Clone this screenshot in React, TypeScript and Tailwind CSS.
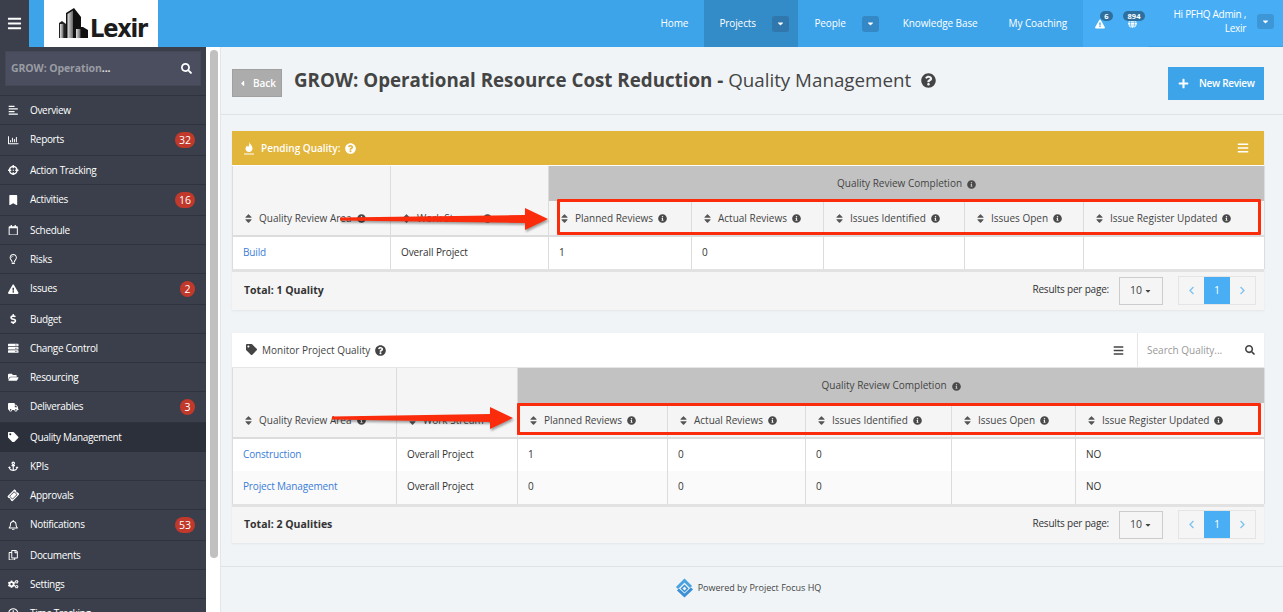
import React from 'react'
import {
    FaAlignLeft, FaRegChartBar, FaCrosshairs, FaBookmark, FaRegCalendar, FaRegLightbulb,
    FaExclamationTriangle, FaDollarSign, FaServer, FaFolderOpen, FaTruck, FaTag, FaAnchor,
    FaTicketAlt, FaRegBell, FaRegCopy, FaCogs, FaRegClock, FaSearch, FaBars, FaSort,
    FaInfoCircle, FaQuestionCircle, FaPlus, FaCaretDown, FaCaretLeft, FaChevronLeft,
    FaChevronRight, FaGlobe,
} from 'react-icons/fa'

const font = { fontFamily: '"Open Sans", sans-serif' }

const menu = [
    { label: 'Overview', icon: FaAlignLeft, h: 'h-[29px]' },
    { label: 'Reports', icon: FaRegChartBar, badge: '32', h: 'h-[31px]' },
    { label: 'Action Tracking', icon: FaCrosshairs, h: 'h-[29px]' },
    { label: 'Activities', icon: FaBookmark, badge: '16', h: 'h-[31px]' },
    { label: 'Schedule', icon: FaRegCalendar, h: 'h-[29px]' },
    { label: 'Risks', icon: FaRegLightbulb, h: 'h-[29px]' },
    { label: 'Issues', icon: FaExclamationTriangle, badge: '2', h: 'h-[31px]' },
    { label: 'Budget', icon: FaDollarSign, h: 'h-[29px]' },
    { label: 'Change Control', icon: FaServer, h: 'h-[29px]' },
    { label: 'Resourcing', icon: FaFolderOpen, h: 'h-[29px]' },
    { label: 'Deliverables', icon: FaTruck, badge: '3', h: 'h-[31px]' },
    { label: 'Quality Management', icon: FaTag, h: 'h-[29px]', active: true },
    { label: 'KPIs', icon: FaAnchor, h: 'h-[29px]' },
    { label: 'Approvals', icon: FaTicketAlt, h: 'h-[29px]', tilt: true },
    { label: 'Notifications', icon: FaRegBell, badge: '53', h: 'h-[31px]' },
    { label: 'Documents', icon: FaRegCopy, h: 'h-[29px]' },
    { label: 'Settings', icon: FaCogs, h: 'h-[29px]' },
    { label: 'Time Tracking', icon: FaRegClock, h: 'h-[29px]' },
]

const LexirLogo = () => (
    <div className="w-[114px] h-[47px] bg-white flex items-end pl-[15px] pb-[9px]">
        <svg width="29" height="30" viewBox="0 0 29 30" className="shrink-0">
            <defs>
                <linearGradient id="tower" x1="0" y1="0" x2="1" y2="0">
                    <stop offset="0" stopColor="#e0e0e0" />
                    <stop offset="1" stopColor="#666" />
                </linearGradient>
            </defs>
            <path d="M7 30V5l8-5 7 9v10h2l5 3v8z" fill="#111" />
            <path d="M0 30V15l3-2 4 3v14z" fill="#222" />
            <path d="M8.500 30V6l5.500-3.500V30z" fill="url(#tower)" />
            <path d="M1 30V16h3.500v14z" fill="url(#tower)" />
            <path d="M17 30V21h4.500v9z" fill="url(#tower)" />
        </svg>
        <span
            className="text-[25px] font-bold leading-[19px] h-[19px] text-[#1c1c1c] ml-[2px] tracking-[-1.2px]"
            style={{ fontFamily: '"DejaVu Sans Condensed", "DejaVu Sans", sans-serif' }}
        >
            Lexir
        </span>
    </div>
)

const NavCaret = ({ dark }: { dark?: boolean }) => (
    <span className={`w-[17px] h-[16px] rounded-[3px] flex items-center justify-center text-white ${dark ? 'bg-[#2f77ac]' : 'bg-[#3488c6]'}`}>
        <FaCaretDown className="text-[9px]" />
    </span>
)

const Sidebar = () => (
    <aside className="w-[206px] shrink-0 bg-[#3a3f4b] flex flex-col overflow-hidden">
        <div className="h-[49px] shrink-0 px-[5px] pt-[4px] border-b border-[#2f333d]">
            <div className="h-[35px] bg-[#4a4e5e] border border-[#454957] flex items-center justify-between pl-[5px] pr-[8px]">
                <span className="text-[10.5px] font-bold text-[#9a9ca4] tracking-[-0.1px]">GROW: Operation<span className="text-[#e4e4e4]">...</span></span>
                <FaSearch className="text-[11px] text-white" />
            </div>
        </div>
        {menu.map((m) => (
            <div
                key={m.label}
                className={`${m.h} shrink-0 flex items-center pl-[8px] pr-[11px] border-b ${m.active ? 'bg-[#2c303b] border-[#2c303b]' : 'border-[#2f333d]'}`}
            >
                <span className={`w-[11px] flex justify-center text-white mr-[11px] ${m.tilt ? '-rotate-45' : ''}`}>
                    <m.icon className="text-[10.5px]" />
                </span>
                <span className={`text-[10px] text-white flex-1 tracking-[-0.33px] ${m.badge ? 'pb-[2px]' : ''}`}>{m.label}</span>
                {m.badge && (
                    <span className="min-w-[15px] h-[16px] px-[4px] rounded-full bg-[#c0392b] text-white text-[10.5px] leading-[16px] text-center">{m.badge}</span>
                )}
            </div>
        ))}
    </aside>
)

const Info = () => <FaInfoCircle className="inline text-[9px] ml-[5px] text-[#4a4a4a] shrink-0" />

const HeadCell = ({ label }: { label: string }) => (
    <th className="border-r border-b-2 border-[#dcdcdc] bg-[#f5f5f5] pl-[10px] pr-0 align-middle text-left font-normal overflow-hidden">
        <span className="flex items-center whitespace-nowrap text-[10px] font-medium text-[#444]">
            <FaSort className="text-[11px] text-[#555] mr-[5px] shrink-0" />
            {label}
            <Info />
        </span>
    </th>
)

const cols = ['Planned Reviews', 'Actual Reviews', 'Issues Identified', 'Issues Open', 'Issue Register Updated']

const QualityTable = ({ widths, rows }: { widths: number[]; rows: string[][] }) => (
    <table className="w-full table-fixed border-collapse border-x border-[#dcdcdc]">
        <colgroup>
            {widths.map((w, i) => <col key={i} style={{ width: w }} />)}
        </colgroup>
        <thead>
            <tr className="h-[35px]">
                <th className="bg-[#f5f5f5] border-r border-[#dcdcdc]" />
                <th className="bg-[#f5f5f5] border-r border-[#dcdcdc]" />
                <th colSpan={5} className="bg-[#c2c2c2] text-[10px] font-medium text-[#444] text-center">
                    Quality Review Completion
                    <Info />
                </th>
            </tr>
            <tr className="h-[35px]">
                <HeadCell label="Quality Review Area" />
                <HeadCell label="Work Stream" />
                {cols.map((c) => <HeadCell key={c} label={c} />)}
            </tr>
        </thead>
        <tbody>
            {rows.map((r, i) => (
                <tr key={r[0]} className={`h-[33px] ${i % 2 ? 'bg-[#fafafa]' : 'bg-white'}`}>
                    {r.map((c, j) => (
                        <td
                            key={j}
                            className={`pl-[10px] pb-[2px] text-[10px] border-r border-[#dcdcdc] ${j === 0 ? 'text-[#3b7dd8] tracking-[-0.15px]' : 'text-[#333] tracking-[-0.1px]'}`}
                        >
                            {c}
                        </td>
                    ))}
                </tr>
            ))}
        </tbody>
    </table>
)

const PanelFooter = ({ total, h }: { total: string; h: string }) => (
    <div className={`${h} border-t-[3px] border-[#e2e2e2] bg-[#f5f5f5] flex items-center justify-between pl-[12px] pr-[8px] pb-[1px]`}>
        <span className="text-[10.5px] font-bold text-[#333]">{total}</span>
        <div className="flex items-center">
            <span className="text-[10px] text-[#333] tracking-[-0.2px] mr-[10px] pb-[2px]">Results per page:</span>
            <span className="w-[44px] h-[28px] border border-[#ccc] flex items-center justify-center text-[10.5px] text-[#444] mr-[15px]">
                10
                <FaCaretDown className="text-[8px] ml-[2px]" />
            </span>
            <div className="flex h-[29px] border border-[#e4e4e4] text-[#7fc4f2] text-[9px]">
                <span className="w-[25px] flex items-center justify-center"><FaChevronLeft /></span>
                <span className="w-[26px] flex items-center justify-center bg-[#4aaef5] text-white text-[10.5px]">1</span>
                <span className="w-[25px] flex items-center justify-center"><FaChevronRight /></span>
            </div>
        </div>
    </div>
)

// Red markup drawn over the screenshot: arrow plus highlight box
const Arrow = ({ cls, w }: { cls: string; w: number }) => (
    <svg width={w + 6} height="30" viewBox={`0 0 ${w + 6} 30`} className={`absolute ${cls}`} style={{ filter: 'drop-shadow(1px 2px 1px rgba(0,0,0,.35))' }}>
        <path d={`M0 12.500L${w - 23} 10V3L${w} 14L${w - 23} 25V18L0 15.500z`} fill="#fb2c0c" />
    </svg>
)

const App = () => (
    <div className="w-[1283px] h-[612px] overflow-hidden flex flex-col bg-[#f0f4f7]" style={font}>
        {/* Top bar */}
        <header className="h-[47px] shrink-0 flex bg-[#3ea4e9] text-white">
            <div className="w-[29px] bg-[#3a3f4b] flex items-center justify-center">
                <FaBars className="text-[15px]" />
            </div>
            <div className="w-[15px]" />
            <LexirLogo />
            <nav className="flex-1 flex justify-end items-center text-[10px] tracking-[-0.1px]">
                <span className="pl-[15px] pr-[16px] h-full flex items-center">Home</span>
                <div className="w-[94px] h-full bg-[#338bc8] flex items-center pl-[15px] justify-between pr-[9px]">
                    Projects
                    <NavCaret dark />
                </div>
                <span className="ml-[16px] mr-[16px]">People</span>
                <NavCaret />
                <span className="ml-[24px]">Knowledge Base</span>
                <span className="ml-[31px] mr-[16px]">My Coaching</span>
            </nav>
            <div className="w-[200px] bg-[#47aef5] relative">
                <span className="absolute left-[12px] top-[19px]"><FaExclamationTriangle className="text-[10px]" /></span>
                <span className="absolute left-[17px] top-[11px] w-[13px] h-[10px] rounded-full bg-[#2e6f9e] text-[7.5px] font-bold text-center leading-[10px]">6</span>
                <span className="absolute left-[45px] top-[19px]"><FaGlobe className="text-[9px]" /></span>
                <span className="absolute left-[40px] top-[11px] w-[22px] h-[10px] rounded-full bg-[#2e6f9e] text-[7.5px] font-bold text-center leading-[10px]">894</span>
                <span className="absolute right-[37px] top-[7px] text-right text-[10px] font-medium leading-[14px] w-[76px] tracking-[-0.3px]">Hi PFHQ Admin , Lexir</span>
                <span className="absolute right-[9px] top-[14px] w-[17px] h-[15px] rounded-[3px] bg-[#3d97d6] flex items-center justify-center"><FaCaretDown className="text-[9px]" /></span>
                <div className="absolute right-0 bottom-0 w-[135px] h-[1px] bg-[#3ea4e9]" />
            </div>
        </header>

        <div className="flex-1 flex min-h-0">
            <Sidebar />
            {/* Scrollbar strip */}
            <div className="w-[14px] shrink-0 bg-white pt-[3px] pl-[4px]">
                <div className="w-[8px] h-[508px] rounded-[4px] bg-[#c0c0c0]" />
            </div>

            <main className="flex-1 min-w-0 flex flex-col border-l border-[#e3e7ea]">
                {/* Page heading */}
                <div className="h-[68px] shrink-0 border-b border-[#dfe3e6] flex pl-[11px] pr-[19px] pt-[20px] justify-between">
                    <div className="flex items-start">
                        <span className="w-[50px] h-[28px] mt-[2px] bg-[#acacac] border border-[#a0a0a0] flex items-center justify-center text-white text-[10px] font-semibold">
                            <FaCaretLeft className="text-[9px] mr-[6px]" />
                            Back
                        </span>
                        <h1 className="ml-[12px] text-[18.75px] leading-[26px] text-[#444] whitespace-nowrap">
                            <span className="font-bold">GROW: Operational Resource Cost Reduction - </span>
                            Quality Management
                            <FaQuestionCircle className="inline text-[15px] ml-[10px] -mt-[3px] text-[#444]" />
                        </h1>
                    </div>
                    <span className="w-[96px] h-[33px] bg-[#3ea4e9] text-white text-[10px] font-semibold tracking-[-0.3px] flex items-center pl-[10px]">
                        <FaPlus className="text-[11px] mr-[10px]" />
                        New Review
                    </span>
                </div>

                <div className="pl-[11px] pr-[19px] pt-[16px] flex flex-col gap-[23px]">
                    {/* Pending panel */}
                    <section className="relative shadow-[0_1px_2px_rgba(0,0,0,.06)]">
                        <div className="h-[35px] bg-[#e2b53b] border-b border-white flex items-center justify-between pl-[12px] pr-[15px] text-white">
                            <div className="flex items-center text-[10px] font-semibold">
                                <svg width="10" height="13" viewBox="0 0 10 13" className="mr-[6px]">
                                    <path d="M5.500 0c.5 2.500 3 3.500 3 6.500 0 2-1.500 3.500-3.500 3.500S1.500 8.500 1.500 6.800c0-1.500 1-2 1.500-3.300.6.600.8 1 .9 1.700C5 4 5.500 2 5.500 0zM0 11.500h10v1H0z" fill="#fff" />
                                </svg>
                                <span className="ml-[1px]">Pending Quality:</span>
                                <FaQuestionCircle className="text-[11px] ml-[5px]" />
                            </div>
                            <FaBars className="text-[12px]" />
                        </div>
                        <QualityTable
                            widths={[158, 158, 143, 132, 141, 119, 181]}
                            rows={[['Build', 'Overall Project', '1', '0', '', '', '']]}
                        />
                        <PanelFooter total="Total: 1 Quality" h="h-[41px]" />
                        <Arrow cls="left-[108px] top-[74px]" w={208} />
                        <div className="absolute left-[325px] top-[68px] w-[704px] h-[36px] border-[3px] border-[#fb2c0c] rounded-[1px]" />
                    </section>

                    {/* Monitor panel */}
                    <section className="relative shadow-[0_1px_2px_rgba(0,0,0,.06)]">
                        <div className="h-[35px] bg-white border-b border-[#e6e6e6] flex items-center justify-between pl-[14px] text-[#444]">
                            <div className="flex items-center text-[10px] font-medium pt-[1px]">
                                <FaTag className="text-[11px] -mt-[3px] mr-[5px]" />
                                Monitor Project Quality
                                <FaQuestionCircle className="text-[11px] ml-[5px] -mt-[1px]" />
                            </div>
                            <div className="flex items-center h-full">
                                <FaBars className="text-[11px] mr-[13px]" />
                                <div className="w-[127px] h-full border-l border-[#e6e6e6] flex items-center justify-between pl-[9px] pr-[9px]">
                                    <span className="text-[10px] text-[#999]">Search Quality...</span>
                                    <FaSearch className="text-[10px]" />
                                </div>
                            </div>
                        </div>
                        <QualityTable
                            widths={[164, 121, 150, 138, 146, 124, 189]}
                            rows={[
                                ['Construction', 'Overall Project', '1', '0', '0', '', 'NO'],
                                ['Project Management', 'Overall Project', '0', '0', '0', '', 'NO'],
                            ]}
                        />
                        <PanelFooter total="Total: 2 Qualities" h="h-[39px]" />
                        <Arrow cls="left-[100px] top-[71px]" w={181} />
                        <div className="absolute left-[285px] top-[70px] w-[744px] h-[32px] border-[3px] border-[#fb2c0c] rounded-[1px]" />
                    </section>
                </div>

                {/* Footer */}
                <footer className="mt-[23px] flex-1 border-t border-[#dfe3e6] flex justify-center pt-[10px] pr-[8px]">
                    <div className="flex items-center h-[22px] text-[9px] text-[#444]">
                        <svg width="19" height="20" viewBox="0 0 19 20" fill="none" className="mr-[4px]">
                            <path d="M2 10L9.500 2.500L16 9" stroke="#4aa3e0" strokeWidth="3" />
                            <path d="M17 10.500L9.500 17.500L3 11.500" stroke="#3b8fd4" strokeWidth="3" />
                            <path d="M6.500 10.500L9.500 7.500L12.500 10.500L9.500 13.500z" stroke="#3b8fd4" strokeWidth="1.500" />
                        </svg>
                        Powered by Project Focus HQ
                    </div>
                </footer>
            </main>
        </div>
    </div>
)

export default App
